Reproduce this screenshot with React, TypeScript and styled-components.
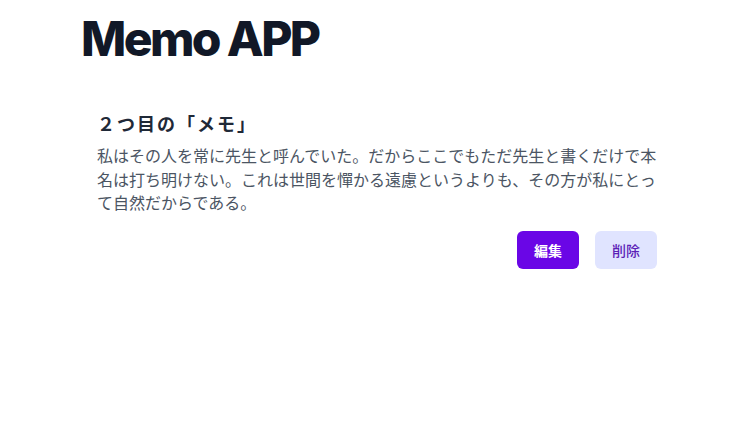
import styled, { createGlobalStyle } from "styled-components";

const GlobalStyle = createGlobalStyle`
    body {
        margin: 0;
        background: #fff;
        font-family: Inter, "Noto Sans CJK JP", sans-serif;
    }
`;

const memo = {
    title: "２つ目の「メモ」",
    body: "私はその人を常に先生と呼んでいた。だからここでもただ先生と書くだけで本名は打ち明けない。これは世間を憚かる遠慮というよりも、その方が私にとって自然だからである。",
};

const App = () => {
    return (
        <Container>
            <GlobalStyle/>
            <Title>Memo APP</Title>
            <MemoList>
                <MemoCard>
                    <MemoTitle>{memo.title}</MemoTitle>
                    <MemoBody>{memo.body}</MemoBody>
                    <ButtonRow>
                        <Button $variant="primary">編集</Button>
                        <Button $variant="light">削除</Button>
                    </ButtonRow>
                </MemoCard>
            </MemoList>
        </Container>
    );
}

export default App;

const Container = styled.div`
    width: 592px;
    padding: 13px 0 0 81px;
    display: flex;
    flex-direction: column;
`;

const Title = styled.h1`
    margin: 0;
    color: #111827;
    font-family: Inter, sans-serif;
    font-size: 48px;
    font-weight: 800;
    letter-spacing: -2.6px;
    line-height: 52px;
`;

const MemoList = styled.div`
    display: flex;
    flex-direction: column;
    margin-top: 46px;
`;

const MemoCard = styled.div`
    display: flex;
    flex-direction: column;
    padding: 0 16px;
`;

const MemoTitle = styled.h2`
    margin: 0;
    color: #1f2937;
    font-size: 18px;
    font-weight: 700;
    line-height: 28px;
    letter-spacing: 2px;
`;

const MemoBody = styled.p`
    margin: 6px 0 0;
    color: #4b5563;
    font-size: 16px;
    line-height: 23.5px;
`;

const ButtonRow = styled.div`
    display: flex;
    justify-content: flex-end;
    gap: 16px;
    margin-top: 15px;
`;

const Button = styled.button<{ $variant: "primary" | "light" }>`
    height: 38px;
    padding: 0 17px;
    border: none;
    border-radius: 6px;
    font-family: Inter, "Noto Sans CJK JP", sans-serif;
    font-size: 14px;
    font-weight: ${({ $variant }) => ($variant === "primary" ? 700 : 500)};
    background: ${({ $variant }) => ($variant === "primary" ? "#6a06e6" : "#e0e4ff")};
    color: ${({ $variant }) => ($variant === "primary" ? "#ffffff" : "#5b21b6")};
`;
